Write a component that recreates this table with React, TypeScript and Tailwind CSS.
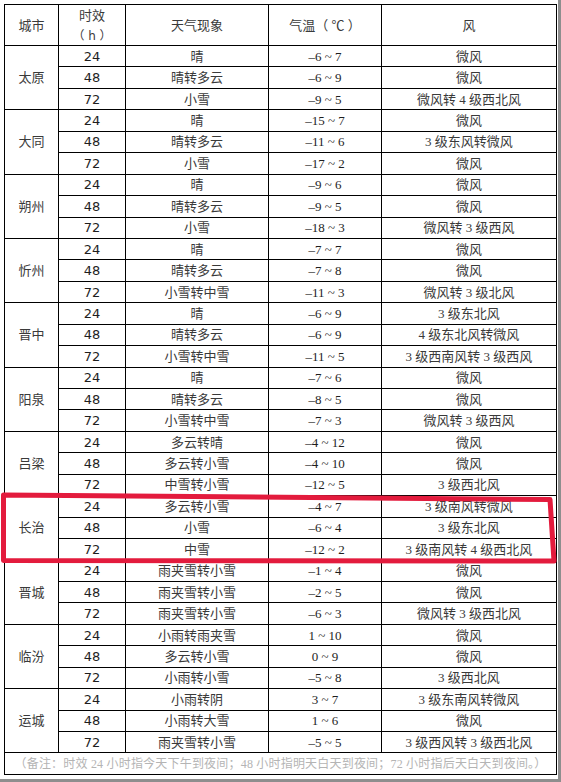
import React from "react";

type Row = [string, string, string, string];

interface CityBlock {
  city: string
  rows: Row[]
}

const data: CityBlock[] = [
  { city: "太原", rows: [["24", "晴", "–6 ~ 7", "微风"], ["48", "晴转多云", "–6 ~ 9", "微风"], ["72", "小雪", "–9 ~ 5", "微风转 4 级西北风"]] },
  { city: "大同", rows: [["24", "晴", "–15 ~ 7", "微风"], ["48", "晴转多云", "–11 ~ 6", "3 级东风转微风"], ["72", "小雪", "–17 ~ 2", "微风"]] },
  { city: "朔州", rows: [["24", "晴", "–9 ~ 6", "微风"], ["48", "晴转多云", "–9 ~ 5", "微风"], ["72", "小雪", "–18 ~ 3", "微风转 3 级西风"]] },
  { city: "忻州", rows: [["24", "晴", "–7 ~ 7", "微风"], ["48", "晴转多云", "–7 ~ 8", "微风"], ["72", "小雪转中雪", "–11 ~ 3", "微风转 3 级北风"]] },
  { city: "晋中", rows: [["24", "晴", "–6 ~ 9", "3 级东北风"], ["48", "晴转多云", "–6 ~ 9", "4 级东北风转微风"], ["72", "小雪转中雪", "–11 ~ 5", "3 级西南风转 3 级西风"]] },
  { city: "阳泉", rows: [["24", "晴", "–7 ~ 6", "微风"], ["48", "晴转多云", "–8 ~ 5", "微风"], ["72", "小雪转中雪", "–7 ~ 3", "微风转 3 级西风"]] },
  { city: "吕梁", rows: [["24", "多云转晴", "–4 ~ 12", "微风"], ["48", "多云转小雪", "–4 ~ 10", "微风"], ["72", "中雪转小雪", "–12 ~ 5", "3 级西北风"]] },
  { city: "长治", rows: [["24", "多云转小雪", "–4 ~ 7", "3 级南风转微风"], ["48", "小雪", "–6 ~ 4", "3 级东北风"], ["72", "中雪", "–12 ~ 2", "3 级南风转 4 级西北风"]] },
  { city: "晋城", rows: [["24", "雨夹雪转小雪", "–1 ~ 4", "微风"], ["48", "雨夹雪转小雪", "–2 ~ 5", "微风"], ["72", "雨夹雪转小雪", "–6 ~ 3", "微风转 3 级西北风"]] },
  { city: "临汾", rows: [["24", "小雨转雨夹雪", "1 ~ 10", "微风"], ["48", "多云转小雪", "0 ~ 9", "微风"], ["72", "小雨转小雪", "–5 ~ 8", "3 级西北风"]] },
  { city: "运城", rows: [["24", "小雨转阴", "3 ~ 7", "3 级东南风转微风"], ["48", "小雨转大雪", "1 ~ 6", "微风"], ["72", "雨夹雪转小雪", "–5 ~ 5", "3 级西风转 3 级西北风"]] },
]

const cjk = "font-['Liberation_Serif','Noto_Sans_CJK_SC',serif]"
const cell = "border border-black p-0 text-center align-middle leading-none"

export default function App() {
  return (
    <div className="relative w-[561px] h-[782px] bg-white">
      <div className="w-[561px] h-[782px] pl-[4px] pt-[4px] pr-[2px] pb-[3px] border-r-[3px] border-b-[3px] border-[#8e8e8e]">
        <table className={`w-[552px] table-fixed border-collapse text-[13px] text-[#3a3a3a] ${cjk}`}>
          <colgroup>
            <col className="w-[54px]" />
            <col className="w-[67px]" />
            <col className="w-[143px]" />
            <col className="w-[113px]" />
            <col className="w-[175px]" />
          </colgroup>
          <thead>
            <tr className="h-[41px]">
              <th className={`${cell} font-normal`}>城市</th>
              <th className={`${cell} font-normal`}>
                <div className="flex flex-col items-center gap-[8px]">
                  <span>时效</span>
                  <span className="font-['DejaVu_Sans','Noto_Sans_CJK_SC',sans-serif] text-[12px]">（ h ）</span>
                </div>
              </th>
              <th className={`${cell} font-normal`}>天气现象</th>
              <th className={`${cell} font-normal`}>气温（ ℃ ）</th>
              <th className={`${cell} font-normal`}>风</th>
            </tr>
          </thead>
          <tbody>
            {data.map((b) =>
              b.rows.map((r, i) => (
                <tr key={b.city + r[0]} className="h-[21.45px]">
                  {i === 0 && (
                    <td rowSpan={3} className={cell}>
                      {b.city}
                    </td>
                  )}
                  <td className={`${cell} font-['DejaVu_Sans',sans-serif] text-[#1e1e1e]`}>{r[0]}</td>
                  <td className={cell}>{r[1]}</td>
                  <td className={`${cell} text-[#1e1e1e]`}>{r[2]}</td>
                  <td className={cell}>{r[3]}</td>
                </tr>
              ))
            )}
            <tr className="h-[22px]">
              <td colSpan={5} className={`${cell} text-[12px] text-[#b4b4b4] tracking-[0.2px]`}>
                （备注：时效 24 小时指今天下午到夜间；48 小时指明天白天到夜间；72 小时指后天白天到夜间。）
              </td>
            </tr>
          </tbody>
        </table>
      </div>
      <svg className="absolute left-0 top-0 pointer-events-none" width="561" height="782">
        <polygon
          points="3.5,495 550,499.5 554,561 3.5,560.5"
          fill="none"
          stroke="#e31b3d"
          strokeWidth="5"
          strokeLinejoin="round"
        />
      </svg>
    </div>
  );
}
